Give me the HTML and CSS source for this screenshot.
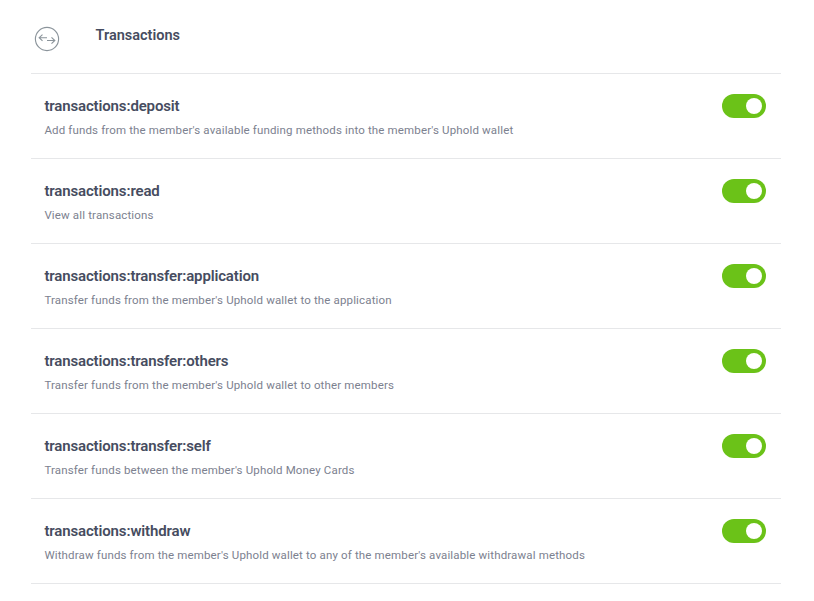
FILE: index.html
```html
<!DOCTYPE html>
<html lang="en">
<head>
<meta charset="utf-8">
<title>Transactions</title>
<link rel="stylesheet" href="styles.css">
</head>
<body>
<section class="permissions">
  <header class="heading">
    <svg class="heading-icon" viewBox="0 0 26 26" width="26" height="26" fill="none" stroke="#8b949b" stroke-width="1.15">
      <circle cx="13" cy="13" r="11.6"/>
      <path d="M13 11.7H5.2M8.5 8.6L5.2 11.7L8.5 14.8M13 14.5H20.8M17.5 11.4L20.8 14.5L17.5 17.6"/>
    </svg>
    <h2 class="heading-title">Transactions</h2>
  </header>
  <ul class="list">
    <li class="item"><div><h3 class="name">transactions:deposit</h3><p class="desc">Add funds from the member's available funding methods into the member's Uphold wallet</p></div><span class="toggle" role="switch" aria-checked="true"></span></li>
    <li class="item"><div><h3 class="name">transactions:read</h3><p class="desc">View all transactions</p></div><span class="toggle" role="switch" aria-checked="true"></span></li>
    <li class="item"><div><h3 class="name">transactions:transfer:application</h3><p class="desc">Transfer funds from the member's Uphold wallet to the application</p></div><span class="toggle" role="switch" aria-checked="true"></span></li>
    <li class="item"><div><h3 class="name">transactions:transfer:others</h3><p class="desc">Transfer funds from the member's Uphold wallet to other members</p></div><span class="toggle" role="switch" aria-checked="true"></span></li>
    <li class="item"><div><h3 class="name">transactions:transfer:self</h3><p class="desc">Transfer funds between the member's Uphold Money Cards</p></div><span class="toggle" role="switch" aria-checked="true"></span></li>
    <li class="item"><div><h3 class="name">transactions:withdraw</h3><p class="desc">Withdraw funds from the member's Uphold wallet to any of the member's available withdrawal methods</p></div><span class="toggle" role="switch" aria-checked="true"></span></li>
  </ul>
</section>
</body>
</html>
```
FILE: styles.css
```css
* { box-sizing: border-box; margin: 0; padding: 0; }
body { background: #fff; font-family: Roboto, "Liberation Sans", sans-serif; color: #464c60; }
.permissions { width: 750px; margin-left: 31px; }
.heading { display: flex; height: 74px; padding: 26px 0 0 3px; gap: 35.5px; border-bottom: 1px solid #e6e7e9; }
.heading-icon { flex: none; }
.heading-title { padding-top: 1px; font-size: 14.5px; font-weight: 600; line-height: 18px; }
.list { list-style: none; }
.item { display: flex; justify-content: space-between; height: 85px; padding: 20px 15px 0 13.4px; border-bottom: 1px solid #e6e7e9; }
.name { font-size: 15px; font-weight: 600; line-height: 24px; letter-spacing: -0.14px; white-space: nowrap; }
.desc { margin-top: 4px; font-size: 11.5px; line-height: 16px; letter-spacing: 0.15px; color: #7c818f; white-space: nowrap; }
.toggle { display: flex; justify-content: flex-end; align-items: center; width: 44px; height: 24px; padding-right: 4px; border-radius: 12px; background: #6bc218; }
.toggle::after { content: ""; width: 16px; height: 16px; border-radius: 50%; background: #fff; }
```
